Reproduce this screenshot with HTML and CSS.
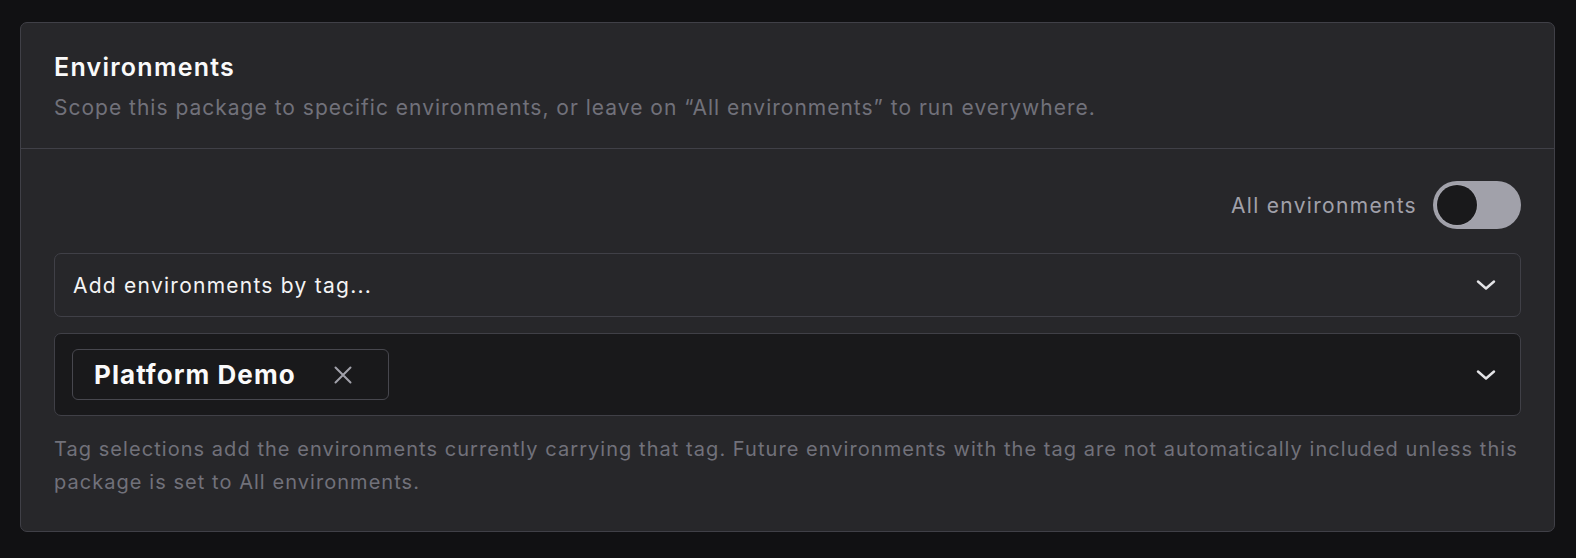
FILE: index.html
```html
<!DOCTYPE html>
<html lang="en">
<head>
  <meta charset="UTF-8" />
  <meta name="viewport" content="width=device-width, initial-scale=1.0" />
  <title>Environments</title>
  <link rel="stylesheet" href="styles.css">
</head>
<body>
  <section class="panel">
    <div class="panel-head">
      <h2>Environments</h2>
      <p>Scope this package to specific environments, or leave on “All environments” to run everywhere.</p>
    </div>

    <div class="panel-body">
      <div class="toggle-row">
        <span class="toggle-label">All environments</span>
        <button class="switch" type="button" aria-pressed="false"><span class="knob"></span></button>
      </div>

      <div class="select">
        <span>Add environments by tag...</span>
        <svg class="chevron" viewBox="0 0 20 10" width="20" height="10"><path d="M2 1.5 L10 8.5 L18 1.5" /></svg>
      </div>

      <div class="select multi">
        <span class="chip">
          Platform Demo
          <svg class="chip-x" viewBox="0 0 18 18" width="18" height="18"><path d="M1.5 1.5 L16.5 16.5 M16.5 1.5 L1.5 16.5" /></svg>
        </span>
        <svg class="chevron" viewBox="0 0 20 10" width="20" height="10"><path d="M2 1.5 L10 8.5 L18 1.5" /></svg>
      </div>

      <p class="hint">Tag selections add the environments currently carrying that tag. Future environments with the tag are not automatically included unless this package is set to All environments.</p>
    </div>
  </section>
</body>
</html>
```

FILE: styles.css
```css
body {
  font-family: Inter, "Noto Sans", Arial, sans-serif;
  margin: 0;
  padding: 22px 21px 26px 20px;
  background-color: #111113;
}
.panel {
  background: #27272a;
  border: 1px solid #404047;
  border-radius: 7px;
}
.panel-head {
  padding: 28px 33px 26px;
  border-bottom: 1px solid #404047;
}
.panel-head h2 {
  margin: 0 0 11px;
  font-size: 25px;
  line-height: 32px;
  font-weight: 600;
  letter-spacing: 1.25px;
  color: #fafafa;
}
.panel-head p {
  margin: 0;
  font-size: 21px;
  line-height: 28px;
  letter-spacing: 1px;
  color: #71717a;
}
.panel-body {
  padding: 32px 33px 32px;
}
.toggle-row {
  display: flex;
  justify-content: flex-end;
  align-items: center;
  gap: 16px;
}
.toggle-label {
  font-size: 21px;
  letter-spacing: 1.3px;
  color: #a1a1aa;
}
.switch {
  width: 88px;
  height: 48px;
  padding: 4px;
  border: none;
  border-radius: 24px;
  background: #a1a1aa;
  display: flex;
  align-items: center;
  cursor: pointer;
}
.knob {
  width: 40px;
  height: 40px;
  border-radius: 50%;
  background: #19191b;
  box-shadow: 0 0 0 1px rgba(255,255,255,0.08);
}
.select {
  margin-top: 24px;
  height: 62px;
  border: 1px solid #404047;
  border-radius: 7px;
  display: flex;
  align-items: center;
  justify-content: space-between;
  padding: 0 24px 0 18px;
  font-size: 21px;
  letter-spacing: 1.25px;
  color: #f4f4f5;
}
.select.multi {
  margin-top: 16px;
  height: 81px;
  padding-left: 17px;
  background: #19191b;
}
.chevron {
  fill: none;
  stroke: #e4e4e7;
  stroke-width: 2.4;
  stroke-linecap: round;
  stroke-linejoin: round;
}
.chip {
  display: flex;
  align-items: center;
  gap: 38px;
  height: 49px;
  padding: 0 36px 0 21px;
  border: 1px solid #47474e;
  border-radius: 6px;
  font-size: 26px;
  font-weight: 700;
  letter-spacing: 1.05px;
  color: #fafafa;
}
.chip-x {
  width: 18px;
  height: 18px;
  fill: none;
  stroke: #a1a1aa;
  stroke-width: 2;
  stroke-linecap: round;
}
.hint {
  margin: 17px 0 0;
  font-size: 20px;
  line-height: 33px;
  letter-spacing: 1.05px;
  color: #71717a;
}
```
